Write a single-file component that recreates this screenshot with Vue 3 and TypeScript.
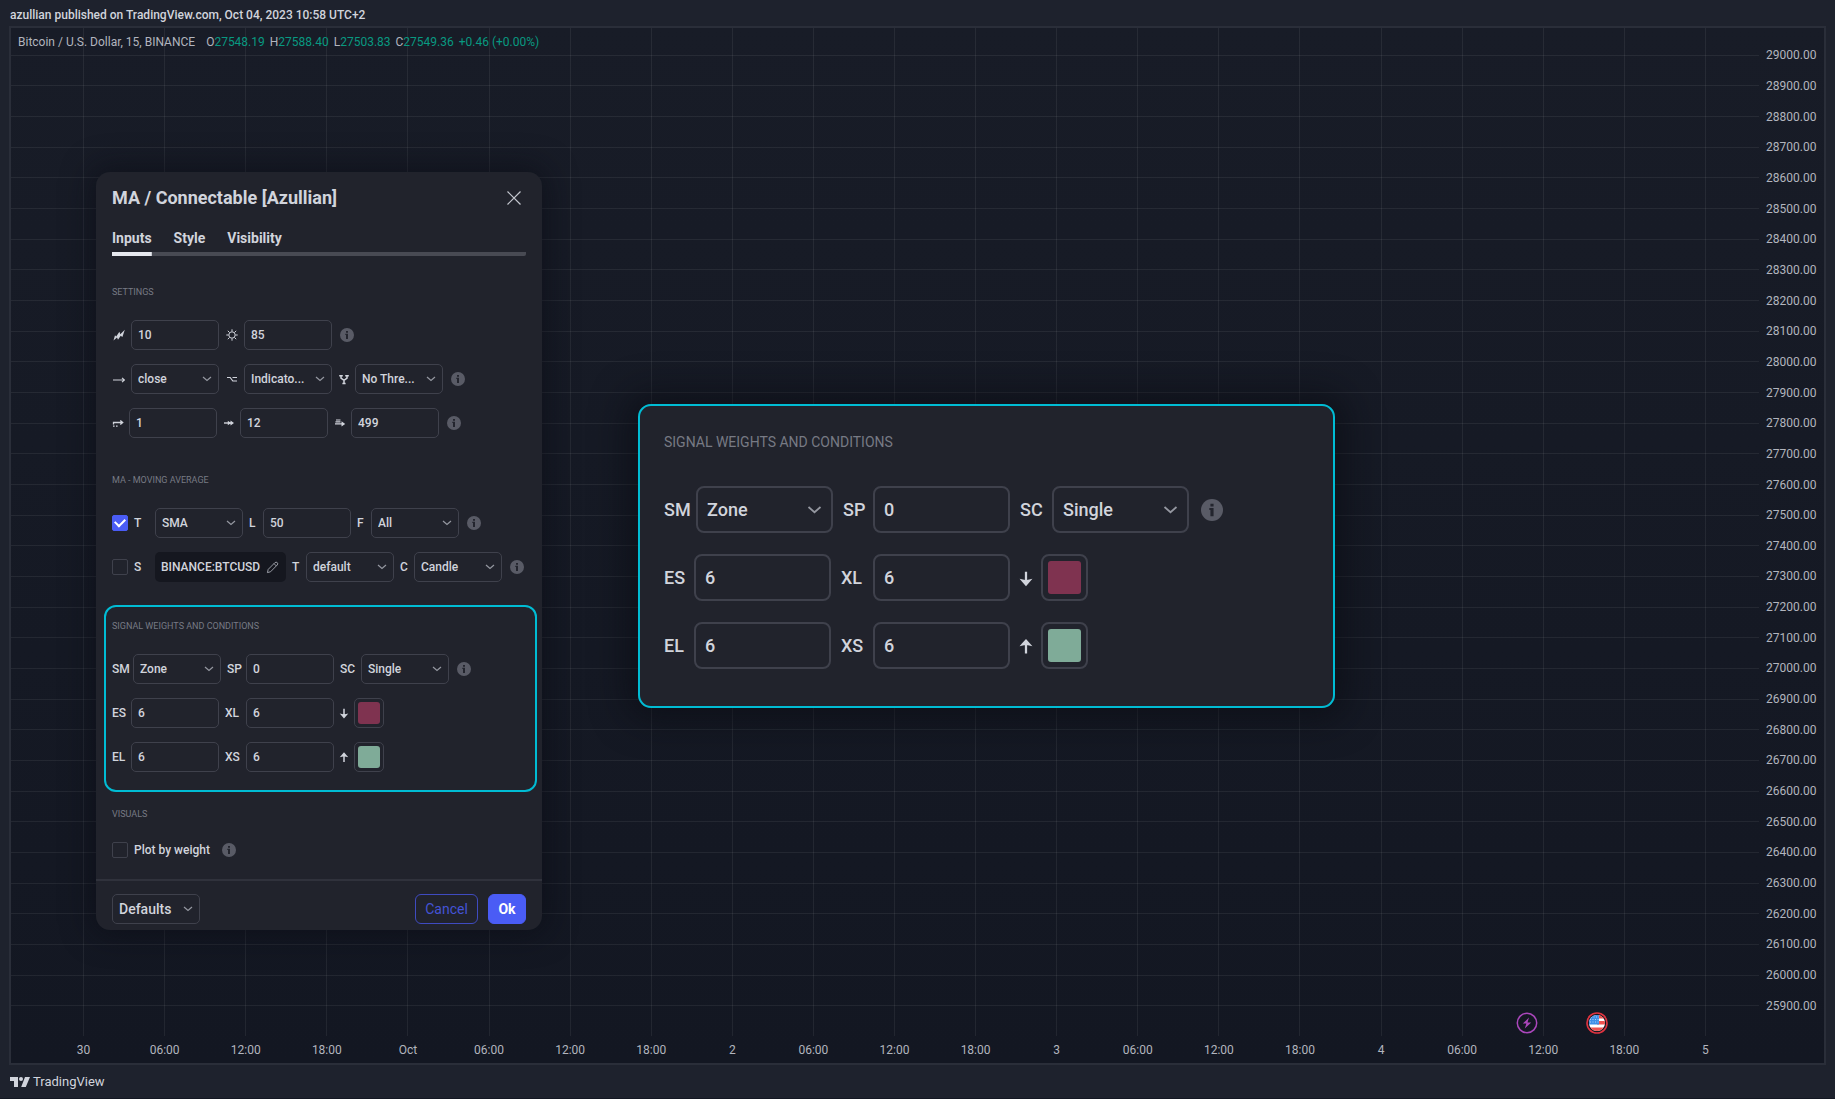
<script setup lang="ts">
import { ref } from 'vue'

type IconName =
  | 'zigzag' | 'sun' | 'arrow' | 'option' | 'fork'
  | 'dotArrow' | 'thickArrow' | 'stackArrow' | 'down' | 'up'

interface Cell {
  kind: 'label' | 'icon' | 'text' | 'select' | 'check' | 'symbol' | 'color' | 'info'
  value?: string
  name?: string
  icon?: IconName
  checked?: boolean
  size?: 'one' | 'mid' | 'two' | 'three' | 'word'
}

interface Section {
  id: string
  title: string
  boxed?: boolean
  rows: Cell[][]
}

const info: Cell = { kind: 'info' }
const label = (value: string, name: string, size: Cell['size'] = 'one'): Cell => ({ kind: 'label', value, name, size })
const icon = (i: IconName, size: Cell['size']): Cell => ({ kind: 'icon', icon: i, size })
const text = (value: string, name: string): Cell => ({ kind: 'text', value, name })
const select = (value: string, name: string): Cell => ({ kind: 'select', value, name })
const check = (name: string, checked: boolean): Cell => ({ kind: 'check', name, checked })
const color = (value: string, name: string): Cell => ({ kind: 'color', value, name })

const signal: Section = {
  id: 'signal',
  title: 'Signal weights and conditions',
  boxed: true,
  rows: [
    [label('SM', 'mode', 'three'), select('Zone', 'mode'), label('SP', 'period', 'two'), text('0', 'period'), label('SC', 'condition', 'three'), select('Single', 'condition'), info],
    [label('ES', 'enter-short', 'two'), text('6', 'enter-short'), label('XL', 'exit-long', 'three'), text('6', 'exit-long'), icon('down', 'one'), color('#7f3350', 'short-color')],
    [label('EL', 'enter-long', 'two'), text('6', 'enter-long'), label('XS', 'exit-short', 'three'), text('6', 'exit-short'), icon('up', 'one'), color('#7fab98', 'long-color')],
  ],
}

const sections: Section[] = [
  {
    id: 'settings',
    title: 'Settings',
    rows: [
      [icon('zigzag', 'two'), text('10', 'speed'), icon('sun', 'two'), text('85', 'brightness'), info],
      [icon('arrow', 'two'), select('close', 'source'), icon('option', 'two'), select('Indicato...', 'mode'), icon('fork', 'mid'), select('No Thre...', 'threshold'), info],
      [icon('dotArrow', 'mid'), text('1', 'start'), icon('thickArrow', 'mid'), text('12', 'length'), icon('stackArrow', 'mid'), text('499', 'limit'), info],
    ],
  },
  {
    id: 'average',
    title: 'MA - Moving average',
    rows: [
      [check('type-on', true), label('T', 'type-on', 'three'), select('SMA', 'type'), label('L', 'length'), text('50', 'length'), label('F', 'filter'), select('All', 'filter'), info],
      [check('symbol-on', false), label('S', 'symbol-on', 'three'), { kind: 'symbol', value: 'BINANCE:BTCUSD' }, label('T', 'timeframe'), select('default', 'timeframe'), label('C', 'candle'), select('Candle', 'candle'), info],
    ],
  },
  signal,
  {
    id: 'visuals',
    title: 'Visuals',
    rows: [[check('plot', false), label('Plot by weight', 'plot', 'word'), info]],
  },
]

const surfaces = [
  { id: 'dialog', sections },
  { id: 'zoom', sections: [signal] },
]

const tabs = ['Inputs', 'Style', 'Visibility']
const activeTab = ref('Inputs')

const prices = Array.from({ length: 32 }, (_, i) => (29000 - i * 100).toFixed(2))
const times = [
  '30', '06:00', '12:00', '18:00', 'Oct', '06:00', '12:00', '18:00', '2', '06:00', '12:00',
  '18:00', '3', '06:00', '12:00', '18:00', '4', '06:00', '12:00', '18:00', '5',
]
const quotes = [['O', '27548.19'], ['H', '27588.40'], ['L', '27503.83'], ['C', '27549.36']]
</script>

<template>
  <div class="page">
    <header class="publish">azullian published on TradingView.com, Oct 04, 2023 10:58 UTC+2</header>

    <main class="frame">
      <div class="chart">
        <div class="plot">
          <div class="rules rules--h"><i v-for="p in prices" :key="p"></i></div>
          <div class="rules rules--v"><i v-for="(t, i) in times" :key="i"></i></div>
          <div class="legend">
            <span class="legend-title">Bitcoin / U.S. Dollar, 15, BINANCE</span>
            <span v-for="q in quotes" :key="q[0]">{{ q[0] }}<b>{{ q[1] }}</b></span>
            <b>+0.46 (+0.00%)</b>
          </div>
          <svg class="event event--idea" viewBox="0 0 22 22">
            <circle cx="11" cy="11" r="9.7" fill="none" stroke="#ab47bc" stroke-width="1.5" />
            <path d="M13 5.5 6.8 11.6h3.6L8.8 16.5 15.2 10.4h-3.7z" fill="#ab47bc" />
          </svg>
          <svg class="event event--flag" viewBox="0 0 22 22">
            <defs><clipPath id="disc"><circle cx="11" cy="11" r="8" /></clipPath></defs>
            <circle cx="11" cy="11" r="10" fill="#131722" stroke="#e03440" stroke-width="1.6" />
            <g clip-path="url(#disc)">
              <path d="M3 3h16v16H3z" fill="#fff" />
              <path d="M11 3h8v3.500h-8zM11 9h8v3.500h-8zM3 15.500h16V19H3z" fill="#ef5350" />
              <path d="M3 3h10v9.500H3z" fill="#3d8fe8" />
              <path d="M5 5h8M4 7.500h9M4 10h9" stroke="#b9d7f7" stroke-width=".9" stroke-dasharray="1 1.500" />
            </g>
          </svg>
        </div>
        <div class="prices"><span v-for="p in prices" :key="p">{{ p }}</span></div>
      </div>
      <div class="times"><span v-for="(t, i) in times" :key="i">{{ t }}</span></div>
    </main>

    <footer class="brand">
      <svg viewBox="0 0 20 10" width="20" height="10">
        <path d="M0 0h8v10H4V4H0zM15 0h5l-4.200 10h-4.600z" fill="#d1d4dc" />
        <circle cx="11" cy="2" r="2" fill="#d1d4dc" />
      </svg>
      TradingView
    </footer>

    <section v-for="s in surfaces" :key="s.id" :class="['surface', 'surface--' + s.id]">
      <template v-if="s.id === 'dialog'">
        <div class="head">
          <h1>MA / Connectable [Azullian]</h1>
          <button class="close" type="button" aria-label="Close">
            <svg viewBox="0 0 14 14" width="14" height="14"><path d="m.5.5 13 13m0-13-13 13" stroke="#c4c7cf" stroke-width="1.200" fill="none" /></svg>
          </button>
        </div>
        <nav class="tabs">
          <button v-for="t in tabs" :key="t" type="button" :class="{ active: t === activeTab }" @click="activeTab = t">{{ t }}</button>
        </nav>
      </template>

      <div class="body">
        <div v-for="sec in s.sections" :key="sec.id" :class="['section', 'section--' + sec.id, { 'section--boxed': sec.boxed }]">
          <h2>{{ sec.title }}</h2>
          <div class="rows">
            <div v-for="(row, r) in sec.rows" :key="r" class="row">
              <template v-for="(c, k) in row" :key="k">
                <label v-if="c.kind === 'label'" :for="[s.id, sec.id, c.name].join('-')" :class="['lead', 'lead--' + c.size]">{{ c.value }}</label>

                <span v-else-if="c.kind === 'icon'" :class="['lead', 'lead--' + c.size]">
                  <svg class="glyph" viewBox="0 0 12 12" fill="none" stroke="#d1d4dc" stroke-width="1">
                    <path v-if="c.icon === 'zigzag'" d="M.5 11.500 2 6.300l1.200 1.300L6.400 2.800l.9 2.400L11.800.8 9.400 8 7.700 6.800 5 10.800 4 8.600z" fill="#d1d4dc" stroke="none" />
                    <template v-else-if="c.icon === 'sun'">
                      <circle cx="6" cy="6" r="3.200" />
                      <path d="M6 .3v2.200M6 9.500v2.200M.3 6h2.200M9.500 6h2.200M1.800 1.800l1.700 1.700M8.500 8.500l1.700 1.700M1.800 10.200l1.700-1.700M8.500 3.500l1.700-1.700" />
                    </template>
                    <path v-else-if="c.icon === 'arrow'" d="M0 7h11.500M9 4.900 11.500 7 9 9.100" stroke-width="1.200" />
                    <path v-else-if="c.icon === 'option'" d="M1 4.500h3.200L6.800 8H11M6.500 4.500H11" stroke-width="1.200" />
                    <path v-else-if="c.icon === 'fork'" d="M1.200 2.800h3.600M7.200 2.800h3.600M3 2.800v2.400L6 7.300l3-2.100V2.800M6 7v3.500M4.400 10.500h3.200" stroke-width="1.500" />
                    <path v-else-if="c.icon === 'dotArrow'" d="M1.500 7.500V5.500h9M8.300 3.500 10.700 5.500 8.300 7.500M1 9.200h1.600M4 9.200h1.600" stroke-width="1.300" />
                    <template v-else-if="c.icon === 'thickArrow'">
                      <path d="M1 6h7" stroke-width="1.400" />
                      <path d="M4.800 3.800 8 6 4.800 8.200zM7.500 3.500 11 6 7.500 8.500z" fill="#d1d4dc" stroke="none" />
                    </template>
                    <template v-else-if="c.icon === 'stackArrow'">
                      <path d="M2 3h4.500M1.500 4.900h5M1 6.800h8" stroke-width="1.200" />
                      <path d="M7.500 4.200 11.200 7 7.500 9.600z" fill="#d1d4dc" stroke="none" />
                    </template>
                    <path v-else-if="c.icon === 'down'" d="M6 1.800V9M3.800 7.800 6 10.300 8.200 7.800 6 8.300z" stroke-width="1.500" fill="#d1d4dc" />
                    <path v-else d="M6 11V4M3.800 4.900 6 2.400 8.200 4.900 6 4.400z" stroke-width="1.500" fill="#d1d4dc" />
                  </svg>
                </span>

                <input v-else-if="c.kind === 'text'" :id="[s.id, sec.id, c.name].join('-')" class="field" type="text" :aria-label="c.name" :value="c.value" />

                <span v-else-if="c.kind === 'select'" class="picker">
                  <select :id="[s.id, sec.id, c.name].join('-')" class="field" :aria-label="c.name"><option>{{ c.value }}</option></select>
                  <svg class="chevron" viewBox="0 0 10 6"><path d="m1 1 4 3.500L9 1" fill="none" stroke="#9598a1" stroke-width="1.200" /></svg>
                </span>

                <input v-else-if="c.kind === 'check'" :id="[s.id, sec.id, c.name].join('-')" class="tick" type="checkbox" :checked="c.checked" />

                <button v-else-if="c.kind === 'symbol'" class="symbol" type="button">
                  {{ c.value }}
                  <svg viewBox="0 0 14 14" width="13" height="13"><path d="M1.500 12.500 2.400 9 9.600 1.800q1.300-1.100 2.500 0 1.200 1.300 0 2.500L4.900 11.600zM8.600 2.800l2.500 2.500" fill="none" stroke="#a3a6af" /></svg>
                </button>

                <input v-else-if="c.kind === 'color'" :id="[s.id, sec.id, c.name].join('-')" class="swatch" type="color" :aria-label="c.name" :value="c.value" />

                <svg v-else class="info" viewBox="0 0 14 14">
                  <circle cx="7" cy="7" r="7" fill="#595b66" />
                  <path d="M6 3h2v1.700H6zM5.300 5.800H8V11H6V7h-.7z" fill="#23252e" />
                </svg>
              </template>
            </div>
          </div>
        </div>
      </div>

      <div v-if="s.id === 'dialog'" class="foot">
        <span class="picker">
          <select class="field field--foot" aria-label="Defaults"><option>Defaults</option></select>
          <svg class="chevron" viewBox="0 0 10 6"><path d="m1 1 4 3.500L9 1" fill="none" stroke="#9598a1" stroke-width="1.200" /></svg>
        </span>
        <button class="btn btn--cancel" type="button">Cancel</button>
        <button class="btn btn--ok" type="button">Ok</button>
      </div>
    </section>
  </div>
</template>

<style>
body { background: #1e222d; }
</style>

<style scoped>
* { box-sizing: border-box; }

.page {
  position: relative;
  display: flex;
  flex-direction: column;
  min-height: 100vh;
  background: #1e222d;
  border-bottom: 1px solid #131722;
  color: #d1d4dc;
  font: 12px/14px Roboto, "Liberation Sans", sans-serif;
}

.publish {
  height: 26px;
  padding: 0 10px;
  line-height: 30px;
  font-weight: 500;
}

/* chart */
.frame {
  flex: 1;
  display: flex;
  flex-direction: column;
  margin: 0 9px;
  border: 2px solid #2a2e39;
  background: linear-gradient(#181c27, #131722);
  color: #b2b5be;
}
.chart { flex: 1; display: flex; }
.plot { position: relative; flex: 1; }
.rules { position: absolute; inset: 0; display: flex; }
.rules i { flex: 1; display: flex; }
.rules i::before { content: ""; background: #f2f2f3; opacity: 0.07; }
.rules--h { flex-direction: column; padding: 12px 0 15px; }
.rules--h i { align-items: center; }
.rules--h i::before { width: 100%; height: 1px; }
.rules--v { padding: 0 13px 0 32px; }
.rules--v i { justify-content: center; }
.rules--v i::before { width: 1px; height: 100%; }

.legend {
  position: relative;
  display: flex;
  gap: 5px;
  padding: 7px;
}
.legend-title { margin-right: 6px; }
.legend b { color: #089981; font-weight: 400; }

.event { position: absolute; bottom: 2px; width: 22px; height: 22px; margin-left: -11px; }
.event--idea { left: 86.7%; }
.event--flag { left: 90.75%; }

.prices {
  display: flex;
  flex-direction: column;
  width: 65px;
  padding: 12px 7px 15px;
}
.prices span { flex: 1; display: flex; align-items: center; }
.times { display: flex; height: 27px; padding: 0 78px 0 32px; line-height: 28px; }
.times span { flex: 1; text-align: center; }

.brand {
  display: flex;
  align-items: center;
  gap: 3px;
  height: 33px;
  padding: 0 10px;
  font-size: 13px;
}

/* surfaces that float above the chart */
.surface {
  --field-w: 88px;
  --field-h: 30px;
  --pad: 6px;
  --gap: 6px;
  --row-gap: 14px;
  --line: 1px;
  --radius: 5px;
  --text: 12px;
  --caption: 9px;
  --one: 8px;
  --mid: 11px;
  --two: 13px;
  --three: 15px;
  --glyph: 12px;
  --info: 14px;
  --chev: 10px;
  --chev-edge: 7px;
  position: absolute;
  background: #21232c;
}
.surface--dialog {
  left: 96px;
  top: 172px;
  width: 446px;
  border-radius: 14px;
  box-shadow: 0 0 30px 4px rgba(10, 11, 20, 0.6);
}
.surface--zoom {
  --field-w: 137px;
  --field-h: 47px;
  --pad: 9px;
  --gap: 10px;
  --row-gap: 21px;
  --line: 2px;
  --radius: 8px;
  --text: 18px;
  --caption: 14px;
  --one: 11px;
  --two: 20px;
  --three: 22px;
  --glyph: 18px;
  --info: 22px;
  --chev: 15px;
  --chev-edge: 11px;
  left: 638px;
  top: 404px;
  width: 697px;
  border-radius: 13px;
  box-shadow: 0 0 34px 12px rgba(10, 11, 18, 0.6);
}

.head {
  display: flex;
  align-items: center;
  justify-content: space-between;
  padding: 14px 21px 18px 16px;
}
h1 { margin: 0; font-size: 18px; line-height: 24px; font-weight: 700; }
.close { display: flex; padding: 0; border: 0; background: none; }

.tabs {
  display: flex;
  gap: 22px;
  margin: 0 16px;
  border-radius: 2px;
  background: linear-gradient(#484a53, #484a53) bottom / 100% 4px no-repeat;
}
.tabs button {
  padding: 0 0 4px;
  border: 0;
  border-bottom: 4px solid transparent;
  background: none;
  color: #d1d4dc;
  font: 700 14px/20px Roboto, "Liberation Sans", sans-serif;
}
.tabs .active {
  background: linear-gradient(#e6e8ee, #e6e8ee) bottom / 100% 4px no-repeat border-box;
}

.body { padding: 30px 16px 0; }
.section + .section { margin-top: 36px; }
h2 {
  margin: 0 0 22px;
  color: #777a84;
  font-size: var(--caption);
  line-height: 12px;
  font-weight: 400;
  text-transform: uppercase;
}
.surface--dialog .section--boxed {
  margin: 23px -11px 0 -8px;
  padding: 13px 6px 18px;
  border: 2px solid #00bcd4;
  border-radius: 12px;
}
.surface--dialog .section--visuals { margin-top: 16px; }
.surface--zoom .body {
  padding: 30px 24px 37px;
  border: 2px solid #00bcd4;
  border-radius: 13px;
}
.surface--zoom h2 { margin-bottom: 38px; }

.rows { display: flex; flex-direction: column; gap: var(--row-gap); }
.row { display: flex; align-items: center; gap: var(--gap); }
.lead { flex: none; display: flex; justify-content: center; font-size: var(--text); line-height: 16px; font-weight: 500; }
label.lead { justify-content: flex-start; }
.lead--one { width: var(--one); }
.lead--mid { width: var(--mid); }
.lead--two { width: var(--two); }
.lead--three { width: var(--three); }
.lead--word { min-width: 80px; }
.glyph { flex: none; width: var(--glyph); height: var(--glyph); }

.field {
  width: var(--field-w);
  height: var(--field-h);
  padding: 0 var(--pad);
  border: var(--line) solid #3f414c;
  border-radius: var(--radius);
  background: transparent;
  color: #d1d4dc;
  font: 500 var(--text)/16px Roboto, "Liberation Sans", sans-serif;
  appearance: none;
  outline: 0;
}
select.field { line-height: normal; }
.picker { position: relative; display: flex; }
.chevron {
  position: absolute;
  right: var(--chev-edge);
  top: 50%;
  width: var(--chev);
  height: var(--pad);
  translate: 0 -50%;
  pointer-events: none;
}

.tick {
  display: grid;
  place-items: center;
  width: 16px;
  height: 16px;
  margin: 0;
  border: 1px solid #3f414c;
  border-radius: 2px;
  appearance: none;
}
.tick:checked { border-color: #4a5cf5; background: #4a5cf5; }
.tick:checked::after {
  content: "";
  width: 8px;
  height: 5px;
  margin-bottom: 3px;
  border: solid #fff;
  border-width: 0 0 2px 2px;
  rotate: -45deg;
}

.symbol {
  display: flex;
  align-items: center;
  justify-content: space-between;
  width: 131px;
  height: 30px;
  padding: 0 7px 0 6px;
  border: 0;
  border-radius: 5px;
  background: #15171f;
  color: #d1d4dc;
  font: 500 12px/16px Roboto, "Liberation Sans", sans-serif;
}

.swatch {
  width: var(--field-h);
  height: var(--field-h);
  padding: 3px;
  border: var(--line) solid #3f414c;
  border-radius: var(--radius);
  background: transparent;
  appearance: none;
}
.surface--zoom .swatch { padding: 5px; }
.swatch::-webkit-color-swatch-wrapper { padding: 0; }
.swatch::-webkit-color-swatch { border: 0; border-radius: 3px; }

.info { flex: none; width: var(--info); height: var(--info); margin-left: 2px; }

.foot {
  display: flex;
  align-items: center;
  gap: 10px;
  margin-top: 21px;
  padding: 13px 16px 6px;
  border-top: 2px solid #30323c;
}
.foot .picker { margin-right: auto; }
.field--foot { font-size: 14px; }
.btn {
  height: 30px;
  border: 1px solid #4a5cf5;
  border-radius: 6px;
  font: 400 14px/18px Roboto, "Liberation Sans", sans-serif;
}
.btn--cancel { width: 63px; padding: 0; background: transparent; border-color: #3f4bc0; color: #4453d6; }
.btn--ok { width: 38px; padding: 0; background: #4a5cf5; color: #fff; font-weight: 700; }
</style>
